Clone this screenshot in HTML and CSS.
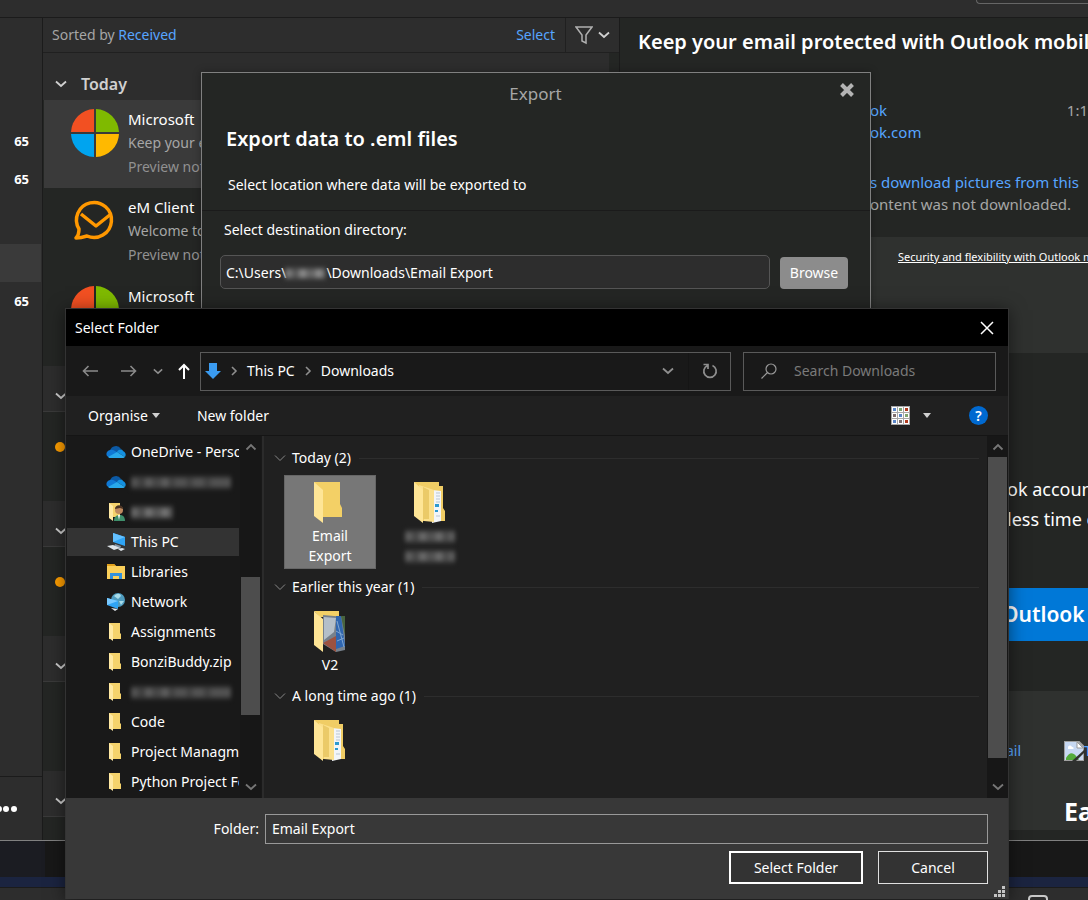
FILE: index.html
```html
<!DOCTYPE html>
<html lang="en">
<head>
    <meta charset="UTF-8">
    <meta name="viewport" content="width=device-width, initial-scale=1.0">
    <title>Export</title>
    <link rel="stylesheet" href="styles.css">
</head>
<body>
    <!-- shared icons -->
    <svg class="sprite" aria-hidden="true">
        <symbol id="chevron-down" viewBox="0 0 12 8"><path d="M1 1.5 6 6l5-4.5" fill="none" stroke="currentColor" stroke-width="1.8"/></symbol>
        <symbol id="chevron-thin" viewBox="0 0 12 8"><path d="M1 1.5 6 6.5l5-5" fill="none" stroke="currentColor" stroke-width="1"/></symbol>
        <symbol id="chevron-up" viewBox="0 0 12 8"><path d="M1.5 6.5 6 2l4.5 4.5" fill="none" stroke="currentColor" stroke-width="1.8"/></symbol>
        <symbol id="chevron-right" viewBox="0 0 8 12"><path d="M2 2l4 4-4 4" fill="none" stroke="currentColor" stroke-width="1.6"/></symbol>
        <symbol id="ms-logo" viewBox="0 0 50 50">
            <path d="M24 1v23H1A24 24 0 0 1 24 1z" fill="#f25022"/>
            <path d="M26 1v23h23A24 24 0 0 0 26 1z" fill="#7fba00"/>
            <path d="M24 49V26H1a24 24 0 0 0 23 23z" fill="#00a4ef"/>
            <path d="M26 49V26h23a24 24 0 0 1-23 23z" fill="#ffb900"/>
        </symbol>
        <symbol id="cloud" viewBox="0 0 20 14">
            <path d="M4 6a6 6 0 0 1 11-2l-5 5z" fill="#0c59a4"/>
            <path d="M1 11a4 4 0 0 1 3-6c3-1 5 1 8 3l-8 5z" fill="#0f78d4"/>
            <path d="M11 7c2-3 5-3 6-1a4 4 0 0 1 2 6z" fill="#1490df"/>
            <path d="M2 12 11 7l8 5c-1 1-2 1-3 1H5c-1 0-2 0-3-1z" fill="#28a8ea"/>
        </symbol>
        <symbol id="folder-small" viewBox="0 0 13 18">
            <path d="M0 0h11v10l1 1v5H0z" fill="#f5d36c"/>
            <path d="M0 0l4 3v15l-4-3z" fill="#ffe9a3"/>
        </symbol>
        <symbol id="folder" viewBox="0 0 32 42">
            <path d="M0 0h26v22l2 4v9H6z" fill="#f3d066"/>
            <path d="M0 0l9 8v33l-9-7z" fill="#fee596"/>
        </symbol>
        <symbol id="folder-docs" viewBox="0 0 32 42">
            <path d="M0 0h25v4h4v22l2 3v10H8z" fill="#f0cd65"/>
            <path d="M18 8l9 1v30l-9 2z" fill="#f2f5f8"/>
            <path d="M22 11h4M22 14h4M22 17h4M22 20h4M22 34h4" stroke="#b9c6d3" stroke-width="1"/>
            <path d="M21 22h4v3h-4zM21 28h3v2h-3z" fill="#2e9ad0"/>
            <path d="M5 3l15 5v32l-10-1z" fill="#fbe08c"/>
            <path d="M9 5l6 3v29H9z" fill="#ebca68"/>
            <path d="M0 0l9 8v33l-9-7z" fill="#fee596"/>
        </symbol>
    </svg>

    <header class="topbar"><div class="top-search"></div></header>

    <main class="app">
        <aside class="sidebar">
            <ul class="counts">
                <li>65</li>
                <li>65</li>
                <li class="blank"></li>
                <li class="selected"></li>
                <li>65</li>
            </ul>
            <button class="more" aria-label="More">
                <svg width="18" height="8" viewBox="0 0 18 8"><g fill="#fff"><circle cx="-1" cy="4" r="3"/><circle cx="6" cy="4" r="3"/><circle cx="14" cy="4" r="3"/></g></svg>
            </button>
        </aside>

        <section class="mail-list">
            <div class="list-tools">
                <span class="sort">Sorted by <a href="#">Received</a></span>
                <a href="#" class="select-link">Select</a>
                <button class="filter" aria-label="Filter">
                    <svg width="18" height="20" viewBox="0 0 18 20"><path d="M1 2h16l-6 8v8l-4-2v-6z" fill="none" stroke="#b0b0b0" stroke-width="1.5"/></svg>
                    <svg width="12" height="8"><use href="#chevron-down"/></svg>
                </button>
            </div>
            <div class="list-body">
                <div class="group today"><svg width="12" height="8"><use href="#chevron-down"/></svg>Today</div>
                <article class="mail selected">
                    <svg class="avatar" width="50" height="50"><use href="#ms-logo"/></svg>
                    <div><h3>Microsoft</h3><p>Keep your e</p><p class="preview">Preview not</p></div>
                </article>
                <article class="mail">
                    <svg class="avatar" width="50" height="50" viewBox="0 0 50 50" fill="none" stroke="#ff9800" stroke-width="3.5" stroke-linejoin="round"><path d="M9 33a17.500 17.500 0 1 1 8 7c-3 1-7 2-11 2 2-2 3-5 3-9z"/><path d="M11 18l15 12 15-12"/></svg>
                    <div><h3>eM Client</h3><p>Welcome to</p><p class="preview">Preview not</p></div>
                </article>
                <article class="mail">
                    <svg class="avatar" width="50" height="50"><use href="#ms-logo"/></svg>
                    <div><h3>Microsoft</h3></div>
                </article>
                <div class="group"><svg width="12" height="8"><use href="#chevron-down"/></svg></div>
                <div class="mail unread"><i></i></div>
                <div class="group"><svg width="12" height="8"><use href="#chevron-down"/></svg></div>
                <div class="mail unread"><i></i></div>
                <div class="group"><svg width="12" height="8"><use href="#chevron-down"/></svg></div>
                <div class="mail"></div>
                <div class="group"><svg width="12" height="8"><use href="#chevron-down"/></svg></div>
            </div>
        </section>

        <section class="reader">
            <div class="message-head">
                <h1>Keep your email protected with Outlook mobile</h1>
                <div class="sender"><a href="#">ok</a><time>1:1</time></div>
                <div class="address"><a href="#">ok.com</a></div>
                <div class="download"><a href="#">s download pictures from this</a></div>
                <div class="notice">ontent was not downloaded.</div>
            </div>
            <div class="banner"><a href="#">Security and flexibility with Outlook mobile</a></div>
            <div class="copy">
                <p>ok account</p>
                <p>less time on</p>
                <a href="#" class="get-outlook">Outlook</a>
            </div>
            <div class="features">
                <div class="broken">
                    <a href="#">ail</a>
                    <svg width="20" height="20" viewBox="0 0 20 20"><path d="M0 0h14l6 6v14H0z" fill="#c7d8f2" stroke="#a0a0a0" stroke-width="2"/><path d="M2 17c3-6 7-6 10-2l3 4H2z" fill="#53ab3b"/><path d="M4 7a2 2 0 0 1 4-1c2 0 2 2 1 2H4z" fill="#fff"/><path d="M13 1v6h6z" fill="#fff" stroke="#999"/><path d="M8 20 20 9v3l-8 8z" fill="#2f312f"/></svg>
                    <a href="#">T</a>
                </div>
                <h2>Ea</h2>
            </div>
        </section>
    </main>

    <footer class="desktop">
        <div class="wallpaper"></div>
        <div class="taskbar"><svg width="20" height="12" viewBox="0 0 20 12"><rect x="1" y="1" width="18" height="18" rx="3" fill="none" stroke="#c8c8c8" stroke-width="2"/></svg></div>
    </footer>

    <!-- export window -->
    <section class="export-window">
        <div class="export-title">
            <span>Export</span>
            <button class="close" aria-label="Close"><svg width="16" height="16" viewBox="0 0 16 16"><path d="M2.500 2.500l11 11M13.500 2.500l-11 11" stroke="#b4b4b4" stroke-width="4"/></svg></button>
        </div>
        <h2>Export data to .eml files</h2>
        <p>Select location where data will be exported to</p>
        <div class="export-body">
            <label for="destination">Select destination directory:</label>
            <div class="path-row">
                <div class="path">
                    <input type="text" id="destination" value="C:\Users\&nbsp;&nbsp;&nbsp;&nbsp;&nbsp;&nbsp;&nbsp;&nbsp;&nbsp;&nbsp;&nbsp;\Downloads\Email Export">
                    <span class="smudge"></span>
                </div>
                <button class="browse">Browse</button>
            </div>
        </div>
    </section>

    <!-- folder picker -->
    <section class="picker">
        <div class="picker-title">
            <span>Select Folder</span>
            <button aria-label="Close"><svg width="14" height="14" viewBox="0 0 14 14"><path d="M1 1l12 12M13 1 1 13" stroke="#fff" stroke-width="1.5"/></svg></button>
        </div>
        <nav class="nav-row">
            <div class="arrows">
                <button aria-label="Back"><svg width="16" height="12" viewBox="0 0 16 12"><path d="M16 6H1.500M6.500 1l-5 5 5 5" fill="none" stroke="#8a8a8a" stroke-width="1.6"/></svg></button>
                <button class="forward" aria-label="Forward"><svg width="16" height="12" viewBox="0 0 16 12"><path d="M0 6h14.500M9.500 1l5 5-5 5" fill="none" stroke="#8a8a8a" stroke-width="1.6"/></svg></button>
                <button aria-label="Recent locations"><svg width="10" height="7"><use href="#chevron-down"/></svg></button>
                <button aria-label="Up"><svg width="12" height="16" viewBox="0 0 12 16"><path d="M6 16V2M1 7l5-5 5 5" fill="none" stroke="#fff" stroke-width="2"/></svg></button>
            </div>
            <div class="address-bar">
                <svg width="16" height="18" viewBox="0 0 16 18"><path d="M4 1h8v8h4l-8 8-8-8h4z" fill="#3a9bf0"/></svg>
                <svg width="8" height="12"><use href="#chevron-right"/></svg>
                <a href="#">This PC</a>
                <svg width="8" height="12"><use href="#chevron-right"/></svg>
                <a href="#">Downloads</a>
                <button class="drop" aria-label="Previous locations"><svg width="12" height="8"><use href="#chevron-down"/></svg></button>
                <button class="refresh" aria-label="Refresh"><svg width="16" height="16" viewBox="0 0 16 16"><path d="M5.500 2.500A6.200 6.200 0 1 0 10.500 2.500M1.500 1.500h4.500v4.500" fill="none" stroke="#8f8f8f" stroke-width="1.7"/></svg></button>
            </div>
            <div class="search">
                <label for="search"><svg width="16" height="16" viewBox="0 0 16 16"><title>Search</title><circle cx="10" cy="6" r="5" fill="none" stroke="#999" stroke-width="1.2"/><path d="M6.500 9.500.500 15.500" stroke="#999" stroke-width="1.2"/></svg></label>
                <input type="text" id="search" placeholder="Search Downloads">
            </div>
        </nav>
        <div class="commands">
            <button class="organise">Organise<i class="caret"></i></button>
            <button>New folder</button>
            <button class="view" aria-label="View">
                <svg width="19" height="19" viewBox="0 0 19 19">
                    <path d="M0 0h19v19H0z" fill="#a8a8a8"/>
                    <path d="M1 1h5v5H1zM7 1h5v5H7zM13 1h5v5h-5zM1 7h5v5H1zM7 7h5v5H7zM13 7h5v5h-5zM1 13h5v5H1zM7 13h5v5H7zM13 13h5v5h-5z" fill="#fff"/>
                    <path d="M2 2h3v3H2zM8 8h3v3H8zM2 14h3v3H2z" fill="#5a86c8"/>
                    <path d="M8 2h3v3H8zM14 8h3v3h-3z" fill="#7fa570"/>
                    <path d="M14 2h3v3h-3zM14 14h3v3h-3z" fill="#b03a1e"/>
                    <path d="M2 8h3v3H2zM8 14h3v3H8z" fill="#7d6e6e"/>
                </svg>
                <i class="caret"></i>
            </button>
            <button class="help" aria-label="Help">?</button>
        </div>
        <div class="panes">
            <ul class="tree">
                <li><svg width="20" height="14"><use href="#cloud"/></svg>OneDrive - Personal</li>
                <li><svg width="20" height="14"><use href="#cloud"/></svg><span class="smudge long"></span></li>
                <li><svg width="20" height="20" viewBox="0 0 20 20"><path d="M3 1h11v14H3z" fill="#f5d36c"/><path d="M3 1l4 3v15l-4-3z" fill="#ffe9a3"/><path d="M8 19c0-5 3-6 6-6s5 2 5 6z" fill="#3f8f6c"/><path d="M12 13h2l-1 5z" fill="#fff"/><circle cx="13" cy="8" r="4" fill="#c08a60"/><path d="M9 7c0-5 8-5 8 0l-3-1z" fill="#4a3424"/></svg><span class="smudge short"></span></li>
                <li class="selected"><svg width="20" height="20" viewBox="0 0 20 20"><path d="M7 1l12 4v9L7 10z" fill="#2fa4f5"/><path d="M7 1l12 4-12 5z" fill="#63c0ff"/><path d="M9 12l6 2-1 3-6-2z" fill="#8495a5"/><path d="M1 14l6-1 7 3-6 2zM12 17l4-1 3 1-4 2z" fill="#dfe5ea"/></svg>This PC</li>
                <li><svg width="20" height="18" viewBox="0 0 20 18"><path d="M1 1h7l2 2h9v13H1z" fill="#fbd05a"/><path d="M1 1h7l2 2H1z" fill="#e2a11c"/><path d="M4 16v-6h12v6h-3v-3H7v3z" fill="#3391dc"/></svg>Libraries</li>
                <li><svg width="20" height="20" viewBox="0 0 20 20"><circle cx="12" cy="8" r="7" fill="#4f9cbf"/><path d="M8 4c3-3 6-3 7 0l-3 3zM13 9h5l-3 4z" fill="#a8dcea"/><path d="M1 6l11 3v8L1 13z" fill="#2fa4f5"/><path d="M1 6l11 3-11 4z" fill="#79c9ff"/><path d="M5 16l7 1-3 2z" fill="#dfe5ea"/></svg>Network</li>
                <li><svg class="narrow" width="13" height="18"><use href="#folder-small"/></svg>Assignments</li>
                <li><svg class="narrow" width="13" height="18"><use href="#folder-small"/></svg>BonziBuddy.zip</li>
                <li><svg class="narrow" width="13" height="18"><use href="#folder-small"/></svg><span class="smudge long"></span></li>
                <li><svg class="narrow" width="13" height="18"><use href="#folder-small"/></svg>Code</li>
                <li><svg class="narrow" width="13" height="18"><use href="#folder-small"/></svg>Project Managment</li>
                <li><svg class="narrow" width="13" height="18"><use href="#folder-small"/></svg>Python Project Folder</li>
            </ul>
            <div class="scrollbar tree-scroll">
                <svg width="12" height="8"><use href="#chevron-up"/></svg>
                <div class="track"><div class="thumb"></div></div>
                <svg width="12" height="8"><use href="#chevron-down"/></svg>
            </div>
            <div class="files">
                <h4><svg width="12" height="8"><use href="#chevron-thin"/></svg>Today (2)</h4>
                <div class="items">
                    <div class="item selected"><svg width="32" height="42"><use href="#folder"/></svg>Email Export</div>
                    <div class="item"><svg width="32" height="42"><use href="#folder-docs"/></svg><span class="smudge"></span><span class="smudge"></span></div>
                </div>
                <h4><svg width="12" height="8"><use href="#chevron-thin"/></svg>Earlier this year (1)</h4>
                <div class="items">
                    <div class="item"><svg width="32" height="42" viewBox="0 0 32 42"><path d="M0 0h25v6H6z" fill="#f3d066"/><path d="M9 4l22 2v33l-9 2-13-8z" fill="#77818c"/><path d="M10 6l12 1-2 14-10 8z" fill="#b4bfc9"/><path d="M9 32l13-7v16z" fill="#9c5240"/><path d="M22 5h5l4 30-9 3z" fill="#2f66b0"/><path d="M27 5h4v20z" fill="#48653f"/><path d="M23 10l7 26M22 20l7 4M23 30l7-3" stroke="#7fa6d2" stroke-width="1"/><path d="M0 0l9 8v33l-9-7z" fill="#fee596"/></svg>V2</div>
                </div>
                <h4><svg width="12" height="8"><use href="#chevron-thin"/></svg>A long time ago (1)</h4>
                <div class="items">
                    <div class="item"><svg width="32" height="42"><use href="#folder-docs"/></svg></div>
                </div>
            </div>
            <div class="scrollbar file-scroll">
                <svg width="12" height="8"><use href="#chevron-up"/></svg>
                <div class="track"><div class="thumb"></div></div>
                <svg width="12" height="8"><use href="#chevron-down"/></svg>
            </div>
        </div>
        <div class="picker-foot">
            <div class="folder-row">
                <label for="folder">Folder:</label>
                <input type="text" id="folder" value="Email Export">
            </div>
            <div class="actions">
                <button class="primary">Select Folder</button>
                <button>Cancel</button>
            </div>
            <svg class="grip" width="11" height="11" viewBox="0 0 11 11"><path d="M8 0h3v3H8zM4 4h3v3H4zM8 4h3v3H8zM0 8h3v3H0zM4 8h3v3H4zM8 8h3v3H8z" fill="#c4c4c4"/></svg>
        </div>
    </section>
</body>
</html>
```

FILE: styles.css
```css
* {
    box-sizing: border-box;
}
body {
    margin: 0;
    height: 100vh;
    overflow: hidden;
    display: flex;
    flex-direction: column;
    position: relative;
    background: #242624;
    color: #fff;
    font-family: "Noto Sans", "Open Sans", sans-serif;
    font-size: 14px;
    line-height: 20px;
}
h1, h2, h3, h4, p, ul {
    margin: 0;
    padding: 0;
    font-weight: normal;
}
ul {
    list-style: none;
}
a {
    color: #57a5ff;
    text-decoration: none;
}
button {
    background: none;
    border: none;
    padding: 0;
    color: inherit;
    font: inherit;
    display: flex;
    align-items: center;
    justify-content: center;
}
input {
    font: inherit;
    color: inherit;
    min-width: 0;
}
svg {
    flex: none;
    display: block;
}
.sprite {
    position: absolute;
    width: 0;
    height: 0;
}

/* mail client */
.topbar {
    flex: none;
    height: 18px;
    background: #2d2d2d;
    border-bottom: 1px solid #1b1b1b;
    display: flex;
    justify-content: flex-end;
    overflow: hidden;
}
.top-search {
    width: 112px;
    height: 4px;
    border: 1px solid #666;
    border-width: 0 0 1px 1px;
    border-radius: 0 0 0 12px;
}
.app {
    flex: 1;
    min-height: 0;
    display: flex;
    overflow: hidden;
    border-bottom: 1px solid #808080;
}
.sidebar {
    flex: none;
    width: 43px;
    background: #2d2d2d;
    border-right: 1px solid #1b1b1b;
    display: flex;
    flex-direction: column;
    justify-content: space-between;
}
.counts {
    padding-top: 104px;
    font-size: 13px;
    font-weight: 700;
}
.counts li {
    height: 38px;
    margin-right: 1px;
    padding-right: 12px;
    line-height: 38px;
    text-align: right;
}
.counts .blank {
    height: 46px;
}
.counts .selected {
    background: #3a3a3a;
}
.more {
    height: 64px;
    justify-content: flex-start;
    border-top: 1px solid #1b1b1b;
}
.mail-list {
    flex: none;
    width: 577px;
    border-right: 1px solid #1b1b1b;
    color: #d0d0d0;
}
.list-tools {
    height: 35px;
    background: #2d2d2d;
    border-bottom: 1px solid #202020;
    display: flex;
    align-items: center;
}
.sort {
    flex: 1;
    padding-left: 9px;
    color: #a6a6a6;
}
.select-link {
    padding-right: 10px;
}
.filter {
    width: 54px;
    height: 34px;
    gap: 5px;
    border-left: 1px solid #202020;
}
.list-body {
    margin-right: 10px;
}
.group {
    height: 46px;
    padding-left: 12px;
    display: flex;
    align-items: center;
    gap: 14px;
    padding-top: 14px;
    background: #2d2d2d;
    border-bottom: 1px solid #3a3a3a;
}
.today {
    height: 47px;
    border: none;
    font-size: 16px;
    font-weight: 600;
}
.mail {
    height: 89px;
    padding: 8px 0 0 27px;
    display: flex;
    gap: 8px;
    white-space: nowrap;
}
.mail.selected {
    margin-left: 1px;
    padding-left: 26px;
    height: 88px;
    background: #3a3a3a;
}
.mail h3 {
    font-size: 15px;
    line-height: 22px;
    color: #fff;
}
.mail p {
    line-height: 26px;
    color: #a6a6a6;
}
.mail .preview {
    line-height: 21px;
    color: #919191;
}
.unread {
    padding: 30px 0 0 12px;
}
.unread i {
    width: 10px;
    height: 10px;
    border-radius: 50%;
    background: #ff9f00;
}
.reader {
    flex: 1;
    min-width: 0;
    white-space: nowrap;
    overflow: hidden;
}
.message-head {
    height: 219px;
    padding: 10px 0 0 18px;
    font-size: 15px;
    line-height: 22px;
    color: #a6a6a6;
}
.message-head h1 {
    font-size: 20px;
    font-weight: 600;
    line-height: 28px;
    color: #fff;
}
.sender, .address, .download, .notice {
    padding-left: 232px;
}
.sender {
    margin-top: 43px;
    display: flex;
    justify-content: space-between;
}
.download {
    margin-top: 28px;
}
.banner {
    height: 116px;
    padding: 10px 0 0 278px;
    background: #2f312f;
    font-size: 11px;
}
.banner a {
    color: #fff;
    text-decoration: underline;
}
.copy {
    height: 338px;
    padding: 121px 0 0 387px;
    font-size: 18px;
    line-height: 30px;
}
.get-outlook {
    display: block;
    margin: 54px 0 0 -5px;
    background: #0078d7;
    color: #fff;
    font-size: 21px;
    font-weight: 600;
    line-height: 53px;
}
.features {
    height: 139px;
    padding: 50px 0 0 386px;
    background: #2f312f;
}
.broken {
    display: flex;
    align-items: center;
}
.broken svg {
    margin-left: 44px;
}
.broken a:first-child {
    width: 14px;
}
.features h2 {
    margin-top: 34px;
    padding-left: 58px;
    font-size: 25px;
    font-weight: 700;
    line-height: 32px;
}
.desktop {
    flex: none;
    height: 59px;
    display: flex;
    flex-direction: column;
    background: #181818;
}
.wallpaper {
    height: 46px;
    background: linear-gradient(90deg, #1b1c22 45px, #181818 45px);
    border-bottom: 10px solid #1b2440;
}
.taskbar {
    flex: 1;
    background: #2d2d2d;
    border-top: 1px solid #1b1b1b;
    padding: 7px 40px 0 0;
    display: flex;
    justify-content: flex-end;
    overflow: hidden;
}

/* blurred names */
.smudge {
    display: block;
    width: 42px;
    height: 15px;
    background:
        linear-gradient(90deg, #777 0 6px, #555 9px 12px, #888 16px 20px, #666 22px 29px, #8a8a8a 32px 36px, #555 40px, #777 46px 54px, #555 58px, #7a7a7a 64px 71px, #555 76px, #777 82px) center / 100% 9px no-repeat,
        #3a3a3a;
    filter: blur(2px);
}
.smudge.long {
    width: 100px;
    opacity: 0.6;
}
.smudge.short {
    opacity: 0.8;
}

/* export window */
.export-window {
    position: absolute;
    top: 72px;
    left: 201px;
    right: 217px;
    bottom: 60px;
    background: #242624;
    border: 1px solid #808080;
    box-shadow: 0 0 8px rgba(0, 0, 0, 0.3);
}
.export-title {
    height: 42px;
    padding-left: 30px;
    display: flex;
    align-items: center;
    font-size: 17px;
    color: #a6a6a6;
}
.export-title span {
    flex: 1;
    text-align: center;
}
.close {
    width: 16px;
    height: 16px;
    margin: 0 15px 8px 0;
}
.export-window h2 {
    margin: 10px 24px 0;
    font-size: 20px;
    font-weight: 600;
    line-height: 28px;
}
.export-window p {
    margin: 22px 26px 0;
}
.export-body {
    margin-top: 15px;
    padding: 9px 22px 0 18px;
    border-top: 1px solid #1b1b1b;
}
.export-body label {
    display: block;
    padding-left: 4px;
}
.path-row {
    margin-top: 15px;
    display: flex;
    gap: 10px;
}
.path {
    flex: 1;
    position: relative;
}
.path input {
    width: 100%;
    height: 34px;
    padding: 0 5px;
    background: #2d2d2d;
    border: 1px solid #555;
    border-radius: 5px;
}
.path .smudge {
    position: absolute;
    left: 65px;
    top: 11px;
    width: 41px;
}
.browse {
    width: 68px;
    height: 32px;
    margin-top: 2px;
    background: #8c8c8c;
    border-radius: 4px;
}

/* folder picker */
.picker {
    position: absolute;
    top: 308px;
    left: 65px;
    right: 79px;
    bottom: 1px;
    display: flex;
    flex-direction: column;
    background: #191919;
    border: 1px solid #333;
    border-bottom: none;
    box-shadow: 0 2px 16px rgba(0, 0, 0, 0.5);
}
.picker-title {
    height: 37px;
    padding: 0 14px 0 9px;
    display: flex;
    align-items: center;
    justify-content: space-between;
    background: #000;
}
.nav-row {
    height: 50px;
    padding-right: 12px;
    display: flex;
    align-items: center;
    color: #8f8f8f;
}
.arrows {
    width: 134px;
    padding: 0 10px 0 16px;
    display: flex;
    align-items: center;
    justify-content: space-between;
}
.forward {
    margin-left: 8px;
}
.address-bar {
    flex: 1;
    height: 39px;
    padding-left: 4px;
    border: 1px solid #5a5a5a;
    display: flex;
    align-items: center;
    gap: 9px;
}
.address-bar a {
    color: #fff;
}
.drop {
    width: 40px;
    margin-left: auto;
}
.refresh {
    width: 42px;
    height: 37px;
    margin-left: -9px;
    border-left: 1px solid #151515;
}
.search {
    width: 253px;
    height: 39px;
    margin-left: 12px;
    padding-left: 17px;
    border: 1px solid #5a5a5a;
    display: flex;
    align-items: center;
    gap: 15px;
}
.search input {
    flex: 1;
    background: none;
    border: none;
}
.search input::placeholder {
    color: #7a7a7a;
}
.commands {
    height: 40px;
    padding: 0 20px 0 22px;
    display: flex;
    align-items: center;
    background: #202020;
    border-bottom: 1px solid #151515;
}
.caret {
    border: 4px solid transparent;
    border-top: 5px solid #d0d0d0;
    border-bottom: none;
}
.organise {
    gap: 4px;
    margin-right: 37px;
}
.view {
    gap: 13px;
    margin-left: auto;
}
.help {
    width: 19px;
    height: 19px;
    margin-left: 38px;
    border-radius: 50%;
    background: #0069d0;
    font-weight: 600;
}
.panes {
    flex: 1;
    min-height: 0;
    display: flex;
}
.tree {
    width: 174px;
    padding: 1px 1px 0 1px;
    overflow: hidden;
}
.tree li {
    height: 30px;
    padding-left: 39px;
    display: flex;
    align-items: center;
    gap: 5px;
    white-space: nowrap;
    overflow: hidden;
    border: 1px solid #191919;
    border-width: 1px 0;
}
.tree .selected {
    background: #333;
}
.tree .narrow {
    margin: 0 4px 0 3px;
}
.scrollbar {
    width: 21px;
    padding: 7px 0;
    display: flex;
    flex-direction: column;
    align-items: center;
    color: #777;
    background: #171717;
}
.track {
    flex: 1;
    width: 19px;
    margin: 6px 0;
    display: flex;
    flex-direction: column;
}
.thumb {
    background: #4d4d4d;
}
.tree-scroll .thumb {
    height: 43%;
    margin-top: auto;
    margin-bottom: 62px;
}
.file-scroll .thumb {
    height: 94%;
}
.files {
    flex: 1;
    margin-left: 1px;
    padding: 4px 8px 0 10px;
    background: #202020;
    border-left: 2px solid #2b2b2b;
    overflow: hidden;
}
.files h4 {
    height: 30px;
    margin-top: 3px;
    display: flex;
    align-items: center;
    gap: 6px;
}
.files h4 svg {
    color: #888;
}
.files h4::after {
    content: "";
    flex: 1;
    margin-left: 2px;
    border-top: 1px solid #2d2d2d;
}
.items {
    margin-top: 2px;
    padding-left: 10px;
    display: flex;
    gap: 8px;
}
.item {
    width: 92px;
    padding: 6px 20px 2px;
    display: flex;
    flex-direction: column;
    align-items: center;
    text-align: center;
    border: 1px solid #202020;
}
.item svg {
    margin-bottom: 2px;
}
.item.selected {
    background: #777;
    border-color: #666;
}
.item .smudge {
    width: 50px;
    margin: 3px 0 2px;
    opacity: 0.7;
}
.picker-foot {
    height: 101px;
    padding: 16px 20px 0 14px;
    background: #383838;
    position: relative;
}
.folder-row {
    display: flex;
    align-items: center;
    gap: 6px;
}
.folder-row label {
    width: 179px;
    text-align: right;
}
.folder-row input {
    flex: 1;
    height: 30px;
    padding: 0 6px 2px;
    background: #383838;
    border: 1px solid #999;
}
.actions {
    margin-top: 7px;
    display: flex;
    justify-content: flex-end;
    gap: 15px;
}
.actions button {
    width: 110px;
    height: 33px;
    background: #333;
    border: 1px solid #e0e0e0;
}
.actions .primary {
    width: 134px;
    border: 2px solid #fff;
}
.grip {
    position: absolute;
    right: 3px;
    bottom: 2px;
}
```
